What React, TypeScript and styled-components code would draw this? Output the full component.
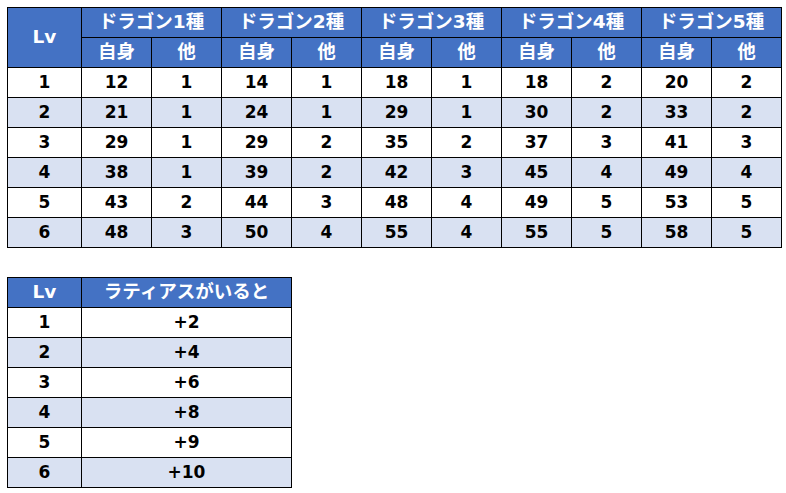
import React from "react";
import styled, { createGlobalStyle } from "styled-components";

const GlobalStyle = createGlobalStyle`
  body {
    margin: 0;
    padding: 7px 0 0 7px;
    background: #ffffff;
    font-family: "DejaVu Sans", "Noto Sans CJK JP", sans-serif;
  }
`;

const Page = styled.div`
  display: flex;
  flex-direction: column;
  gap: 29px;
`;

const Table = styled.table<{ width: number }>`
  border-collapse: collapse;
  table-layout: fixed;
  width: ${p => p.width}px;
  font-weight: 700;
`;

const Head = styled.th`
  background: #4472c4;
  color: #ffffff;
  border: 1px solid #000000;
  height: 29px;
  padding: 0;
  font-size: 18.5px;
  font-weight: 700;
  text-align: center;
  line-height: 1;
`;

const Row = styled.tr<{ striped: boolean }>`
  background: ${p => (p.striped ? "#d9e1f2" : "#ffffff")};
`;

const Cell = styled.td`
  border: 1px solid #000000;
  height: 29px;
  padding: 0;
  font-size: 17px;
  text-align: center;
  color: #000000;
  line-height: 1;
`;

const dragonData = [
  [1, 12, 1, 14, 1, 18, 1, 18, 2, 20, 2],
  [2, 21, 1, 24, 1, 29, 1, 30, 2, 33, 2],
  [3, 29, 1, 29, 2, 35, 2, 37, 3, 41, 3],
  [4, 38, 1, 39, 2, 42, 3, 45, 4, 49, 4],
  [5, 43, 2, 44, 3, 48, 4, 49, 5, 53, 5],
  [6, 48, 3, 50, 4, 55, 4, 55, 5, 58, 5]
];

const bonusData = [
  [1, "+2"],
  [2, "+4"],
  [3, "+6"],
  [4, "+8"],
  [5, "+9"],
  [6, "+10"]
];

export default function App() {
  const kinds = [1, 2, 3, 4, 5];
  return (
    <>
      <GlobalStyle />
      <Page>
        <Table width={774}>
          <colgroup>
            <col style={{ width: 74 }} />
            {Array.from({ length: 10 }).map((_, i) => (
              <col key={i} style={{ width: 70 }} />
            ))}
          </colgroup>
          <thead>
            <tr>
              <Head rowSpan={2}>Lv</Head>
              {kinds.map(k => (
                <Head key={k} colSpan={2}>
                  ドラゴン{k}種
                </Head>
              ))}
            </tr>
            <tr>
              {kinds.map(k => (
                <React.Fragment key={k}>
                  <Head>自身</Head>
                  <Head>他</Head>
                </React.Fragment>
              ))}
            </tr>
          </thead>
          <tbody>
            {dragonData.map((row, i) => (
              <Row key={i} striped={i % 2 === 1}>
                {row.map((v, j) => (
                  <Cell key={j}>{v}</Cell>
                ))}
              </Row>
            ))}
          </tbody>
        </Table>

        <Table width={284}>
          <colgroup>
            <col style={{ width: 74 }} />
            <col style={{ width: 210 }} />
          </colgroup>
          <thead>
            <tr>
              <Head>Lv</Head>
              <Head>ラティアスがいると</Head>
            </tr>
          </thead>
          <tbody>
            {bonusData.map((row, i) => (
              <Row key={i} striped={i % 2 === 1}>
                <Cell>{row[0]}</Cell>
                <Cell>{row[1]}</Cell>
              </Row>
            ))}
          </tbody>
        </Table>
      </Page>
    </>
  );
}
